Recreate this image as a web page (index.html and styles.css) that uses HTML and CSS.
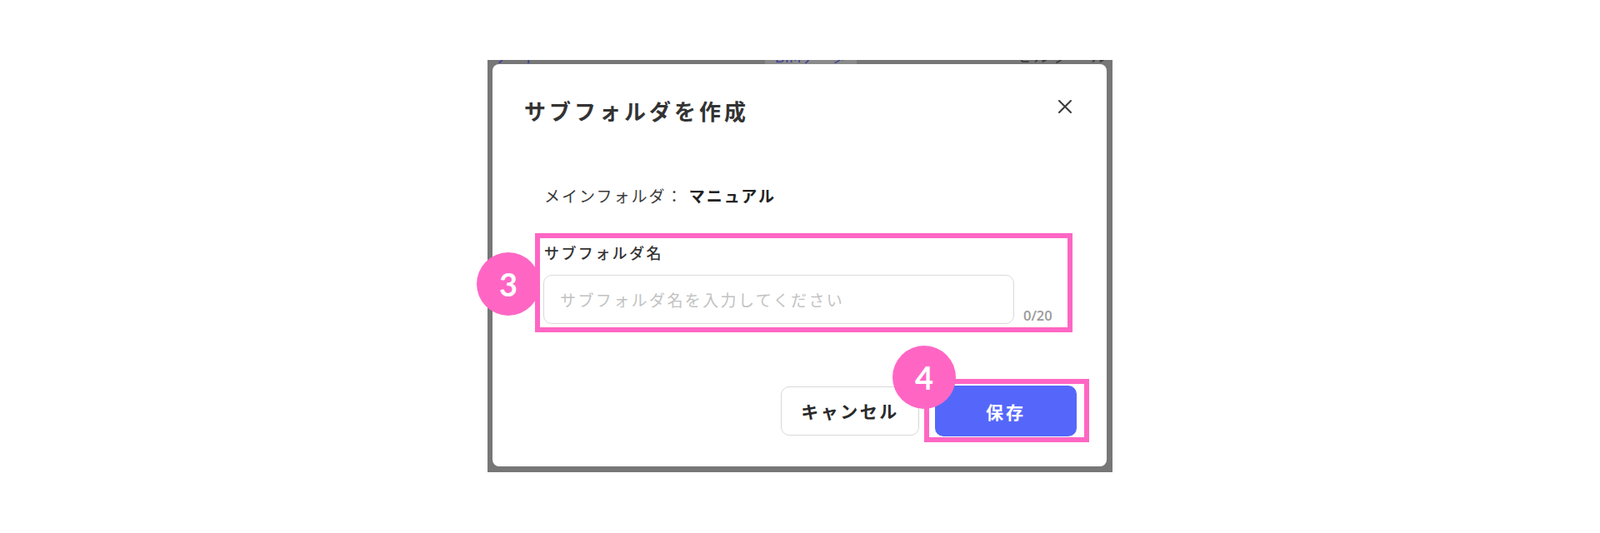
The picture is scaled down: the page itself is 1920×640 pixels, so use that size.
FILE: index.html
```html
<!DOCTYPE html>
<html lang="ja">
<head>
  <meta charset="UTF-8" />
  <meta name="viewport" content="width=device-width, initial-scale=1.0"/>
  <title>サブフォルダを作成</title>
  <link rel="stylesheet" href="styles.css">
</head>
<body>
  <div class="overlay">
    <!-- bits of the page behind the modal -->
    <div class="behind">
      <span class="behind-a">ティ</span>
      <span class="behind-b">BIMデータ</span>
      <span class="behind-c">モルタール</span>
    </div>

    <div class="dialog">
      <div class="dialog-head">
        <h2 class="dialog-title">サブフォルダを作成</h2>
        <button class="close-btn" aria-label="閉じる">
          <svg width="18" height="18" viewBox="0 0 18 18">
            <path d="M2 2 L16 16 M16 2 L2 16" stroke="#3a3a3a" stroke-width="2" stroke-linecap="round" fill="none"/>
          </svg>
        </button>
      </div>

      <p class="main-folder">メインフォルダ： <b>マニュアル</b></p>

      <div class="mark field">
        <span class="badge badge-3">3</span>
        <label class="field-label" for="subName">サブフォルダ名</label>
        <div class="field-row">
          <input id="subName" class="field-input" placeholder="サブフォルダ名を入力してください" maxlength="20" />
          <span class="counter">0/20</span>
        </div>
      </div>

      <div class="dialog-foot">
        <button class="btn btn-cancel">キャンセル</button>
        <div class="mark mark-save">
          <span class="badge badge-4">4</span>
          <button class="btn btn-save">保存</button>
        </div>
      </div>
    </div>
  </div>
</body>
</html>
```

FILE: styles.css
```css
body { margin: 0; padding-top: 72px; background: #fff; font-family: "Noto Sans CJK JP", "Noto Sans", sans-serif; color: #333; }

.overlay { width: 737px; margin: 0 auto; background: #777; padding: 0 7px 7px 6px; }

.behind { height: 5px; overflow: hidden; display: flex; font-size: 20px; line-height: 20px; }
.behind span { margin-top: -15px; white-space: nowrap; }
.behind-a { color: #3d3f9c; letter-spacing: 12px; margin-left: 2px; }
.behind-b { color: #3d3f9c; margin-left: 262px; background: #8a8a8a; padding: 0 12px; font-size: 18px; }
.behind-c { color: #3c3c3c; margin-left: auto; letter-spacing: 3px; margin-right: -4px; }

.dialog { background: #fff; border-radius: 8px; padding: 38px 21px 29px 38px; }

.dialog-head { display: flex; justify-content: space-between; align-items: flex-start; padding-right: 20px; }
.dialog-title { margin: 0; font-size: 26px; line-height: 36px; font-weight: 700; letter-spacing: 4px; color: #333; }
.close-btn { border: none; background: none; padding: 0; margin-top: 4px; width: 18px; height: 18px; cursor: pointer; }
.close-btn svg { display: block; }

.main-folder { margin: 71px 0 0 24px; font-size: 19px; line-height: 26px; letter-spacing: 2px; color: #3a3a3a; }
.main-folder b { color: #222; }

.mark { border: 6px solid #ff66c4; position: relative; }
.field { margin: 32px 20px 0 13px; padding: 4px 14px 4px 4px; }
.field-label { display: block; padding-left: 1px; font-size: 18px; line-height: 26px; letter-spacing: 2.4px; font-weight: 500; color: #333; }
.field-row { display: flex; align-items: flex-end; gap: 11px; margin-top: 14px; }
.field-input { flex: 1; height: 59px; box-sizing: border-box; border: 1.5px solid #dadada; border-radius: 10px; padding: 0 19px; font-family: inherit; font-size: 19px; letter-spacing: 2.4px; outline: none; }
.field-input::placeholder { color: #c2c2c2; }
.counter { width: 39px; font-family: "Open Sans", sans-serif; font-size: 16.5px; font-weight: 600; line-height: 20px; color: #9a9a9a; }

.badge { position: absolute; width: 76px; height: 76px; border-radius: 50%; background: #ff66c4; color: #fff; font-family: "Lato", "Open Sans", sans-serif; font-weight: 700; font-size: 38px; display: flex; align-items: center; justify-content: center; z-index: 2; }
.badge-3 { left: -76px; top: 17px; }
.badge-4 { left: -44px; top: -46px; }

.dialog-foot { display: flex; justify-content: flex-end; align-items: center; gap: 6px; margin-top: 56px; }
.mark-save { padding: 2px 9px 1px 7px; }
.btn { font-family: inherit; font-weight: 700; border-radius: 10px; cursor: pointer; }
.btn-cancel { width: 166px; height: 59px; background: #fff; border: 1.5px solid #d8d8d8; font-size: 21px; letter-spacing: 2.5px; color: #2a2a2a; }
.btn-save { display: block; width: 170px; height: 61px; background: #5567fa; border: none; color: #fff; font-size: 21px; letter-spacing: 3px; }
```
